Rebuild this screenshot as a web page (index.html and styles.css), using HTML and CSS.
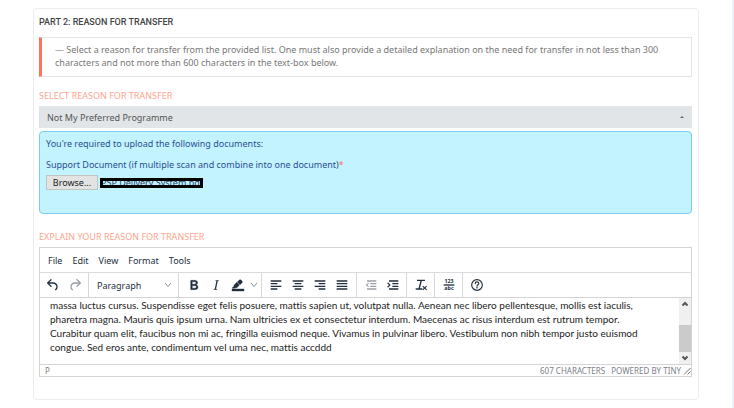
FILE: index.html
```html
<!DOCTYPE html>
<html lang="en">
<head>
<meta charset="utf-8">
<meta name="viewport" content="width=device-width, initial-scale=1">
<title>Reason for Transfer</title>
<link rel="stylesheet" href="styles.css">
</head>
<body>
<main class="page">
  <form class="card">
    <h2 class="title">PART 2: REASON FOR TRANSFER</h2>
    <p class="note">— Select a reason for transfer from the provided list. One must also provide a detailed explanation on the need for transfer in not less than 300 characters and not more than 600 characters in the text-box below.</p>

    <label class="label" for="reason">SELECT REASON FOR TRANSFER</label>
    <div class="select-wrap">
      <select class="select" id="reason"><option>Not My Preferred Programme</option></select>
      <span class="caret"></span>
    </div>

    <section class="upload">
      <p>You're required to upload the following documents:</p>
      <p id="doc-label">Support Document (if multiple scan and combine into one document)<span class="star">*</span></p>
      <div class="file-row">
        <button class="browse" type="button" aria-describedby="doc-label">Browse...</button>
        <span class="file-name">PSP Delivery System.pdf</span>
      </div>
    </section>

    <label class="label label-explain" for="explain">EXPLAIN YOUR REASON FOR TRANSFER</label>
    <div class="editor">
      <div class="menubar">
        <button type="button">File</button>
        <button type="button">Edit</button>
        <button type="button">View</button>
        <button type="button">Format</button>
        <button type="button">Tools</button>
      </div>
      <div class="toolbar">
        <div class="group">
          <button class="tool" type="button" aria-label="Undo"><svg viewBox="0 0 24 24"><path d="M6.4 8H12c3.7 0 6.2 2 6.8 5.1.6 2.7-.4 5.6-2.3 6.8a1 1 0 0 1-1-1.8c1.1-.6 1.8-2.7 1.4-4.6-.5-2.1-2.1-3.5-4.9-3.5H6.4l3.3 3.3a1 1 0 1 1-1.4 1.4l-5-5a1 1 0 0 1 0-1.4l5-5a1 1 0 0 1 1.4 1.4L6.4 8z"/></svg></button>
          <button class="tool" type="button" aria-label="Redo" disabled><svg viewBox="0 0 24 24"><path d="M17.6 10H12c-2.8 0-4.4 1.4-4.9 3.5-.4 2 .3 4 1.4 4.6a1 1 0 1 1-1 1.8c-2-1.2-2.9-4.1-2.3-6.8.6-3 3-5.1 6.8-5.1h5.6l-3.3-3.3a1 1 0 1 1 1.4-1.4l5 5a1 1 0 0 1 0 1.4l-5 5a1 1 0 0 1-1.4-1.4l3.3-3.3z"/></svg></button>
        </div>
        <div class="group">
          <button class="format" type="button">Paragraph <svg class="chevron" viewBox="0 0 10 10"><path d="M2 3l3 3.500 3-3.500"/></svg></button>
        </div>
        <div class="group group-wide">
          <button class="tool" type="button" aria-label="Bold"><svg viewBox="0 0 24 24"><path d="M7.800 19c-.3 0-.5 0-.6-.2l-.2-.5V5.700c0-.2 0-.4.2-.5l.6-.2h5c1.500 0 2.700.3 3.500 1 .7.6 1.100 1.400 1.100 2.500a3 3 0 0 1-.6 1.900c-.4.6-1 1-1.600 1.200.4.1.9.3 1.300.6s.8.7 1 1.200c.4.4.5 1 .5 1.600 0 1.300-.4 2.300-1.300 3-.8.7-2.100 1-3.800 1H7.800zm5-8.300c.6 0 1.200-.1 1.600-.5.4-.3.6-.7.6-1.300 0-1.100-.8-1.700-2.300-1.700H9.300v3.500h3.400zm.5 6c.7 0 1.300-.1 1.700-.4.4-.4.6-.9.6-1.500s-.2-1-.7-1.400c-.4-.3-1-.4-2-.4H9.400v3.800h4z" stroke="currentColor" stroke-width=".6"/></svg></button>
          <button class="tool" type="button" aria-label="Italic"><svg viewBox="0 0 24 24"><path d="M16.700 4.700l-.1.9h-.3c-.6 0-1 0-1.400.3-.3.3-.4.6-.5 1.100l-2.100 9.800v.6c0 .5.4.8 1.400.8h.2l-.2.8H8l.2-.8h.2c1.100 0 1.800-.5 2-1.500l2-9.800.1-.5c0-.6-.4-.8-1.400-.8h-.3l.2-.9h5.800z"/></svg></button>
          <button class="tool" type="button" aria-label="Background color"><svg viewBox="0 0 24 24"><path d="M3 18h18v3H3zM7.700 16.700H3l3.300-3.300-.7-.8L10.200 8l4 4.100-4 4.200c-.2.2-.6.2-.8 0l-.6-.7-1.100 1.100zm5-7.500L11 7.400l3-2.900a2 2 0 0 1 2.600 0L18 6c.7.7.7 2 0 2.700l-2.900 2.900-1.800-1.800-.6-.6z" stroke="currentColor" stroke-width=".6"/></svg></button>
          <button class="drop" type="button" aria-label="Color options"><svg class="chevron" viewBox="0 0 10 10"><path d="M2 3l3 3.500 3-3.500"/></svg></button>
        </div>
        <div class="group group-aligns">
          <button class="tool" type="button" aria-label="Align left"><svg viewBox="0 0 24 24"><path d="M4 5h16v2H4zM4 9h10v2H4zM4 13h16v2H4zM4 17h10v2H4z"/></svg></button>
          <button class="tool" type="button" aria-label="Align center"><svg viewBox="0 0 24 24"><path d="M4 5h16v2H4zM7 9h10v2H7zM4 13h16v2H4zM7 17h10v2H7z"/></svg></button>
          <button class="tool" type="button" aria-label="Align right"><svg viewBox="0 0 24 24"><path d="M4 5h16v2H4zM10 9h10v2H10zM4 13h16v2H4zM10 17h10v2H10z"/></svg></button>
          <button class="tool" type="button" aria-label="Justify"><svg viewBox="0 0 24 24"><path d="M4 5h16v2H4zM4 9h16v2H4zM4 13h16v2H4zM4 17h16v2H4z"/></svg></button>
        </div>
        <div class="group">
          <button class="tool" type="button" aria-label="Decrease indent" disabled><svg viewBox="0 0 24 24"><path d="M6 5h14v2H6zM11 9h9v2h-9zM11 13h9v2h-9zM6 17h14v2H6zM8 8.500l1 1L6.500 12 9 14.500l-1 1L4 12z"/></svg></button>
          <button class="tool" type="button" aria-label="Increase indent"><svg viewBox="0 0 24 24"><path d="M6 5h14v2H6zM11 9h9v2h-9zM11 13h9v2h-9zM6 17h14v2H6zM4.500 8l-1.200 1.200L6 12l-2.700 2.800L4.500 16l4-4z"/></svg></button>
        </div>
        <div class="group">
          <button class="tool" type="button" aria-label="Clear formatting"><svg viewBox="0 0 24 24"><path d="M6 4h12v2h-4.800l-2.700 11H14v2H4v-2h4.400l2.700-11H6zM15.200 13l2.300 2.300 2.300-2.300 1.200 1.200-2.300 2.300 2.300 2.300-1.200 1.200-2.300-2.300-2.300 2.300-1.200-1.200 2.300-2.300-2.300-2.300z"/></svg></button>
        </div>
        <div class="group">
          <button class="tool" type="button" aria-label="Word count"><svg viewBox="0 0 24 24"><path d="M4 11h16v2H4z"/><text x="12" y="9" text-anchor="middle">123</text><text x="12" y="20" text-anchor="middle">abc</text></svg></button>
        </div>
        <div class="group">
          <button class="tool" type="button" aria-label="Help"><svg viewBox="0 0 24 24"><g fill="none" stroke="currentColor" stroke-width="1.700"><circle cx="12" cy="12" r="8"/><path d="M9.300 10c0-3.600 5.400-3.400 5.400-.3 0 2-2.700 2-2.700 4" stroke-linecap="round"/></g><circle cx="12" cy="16.200" r="1.100"/></svg></button>
        </div>
      </div>
      <div class="content">
        <textarea id="explain" class="text" spellcheck="false" wrap="off">
massa luctus cursus. Suspendisse eget felis posuere, mattis sapien ut, volutpat nulla. Aenean nec libero pellentesque, mollis est iaculis,
pharetra magna. Mauris quis ipsum urna. Nam ultricies ex et consectetur interdum. Maecenas ac risus interdum est rutrum tempor.
Curabitur quam elit, faucibus non mi ac, fringilla euismod neque. Vivamus in pulvinar libero. Vestibulum non nibh tempor justo euismod
congue. Sed eros ante, condimentum vel uma nec, mattis accddd</textarea>
        <div class="scrollbar" aria-hidden="true">
          <svg viewBox="0 0 12 12"><path d="M3.500 7.500L6 5l2.500 2.500"/></svg>
          <span class="thumb"></span>
          <svg viewBox="0 0 12 12"><path d="M3.500 4.500L6 7l2.500-2.500"/></svg>
        </div>
      </div>
      <div class="status">
        <span class="path">P</span>
        <span>607 CHARACTERS</span>
        <a class="brand" href="#tiny">POWERED BY TINY</a>
        <svg class="grip" viewBox="0 0 8 8"><path d="M1 7.500L7.500 1M4.500 7.500l3-3"/></svg>
      </div>
    </div>
  </form>
</main>
</body>
</html>
```
FILE: styles.css
```css
*, *::after { box-sizing: border-box; }

body {
  margin: 0;
  background: #fff;
  color: #777;
  font: 9px/13px "Noto Sans", "Open Sans", sans-serif;
}

p, h2 { margin: 0; }

button {
  margin: 0;
  padding: 0;
  border: 0;
  background: none;
  color: inherit;
  font: inherit;
}

.page {
  min-height: 100vh;
  padding: 8px 33px 9px;
  border-right: 2px solid #edf2f8;
}

.card {
  padding: 7px 6px 22px 5px;
  border: 1px solid #ececee;
  border-radius: 4px;
}

.title {
  color: #444;
  font: 500 9px/13px Roboto, sans-serif;
}

.note {
  margin-top: 8px;
  padding: 5px 24px 7px 13px;
  border: 1px solid #e4e4e6;
  border-left: 3px solid #ff7454;
}

.label {
  display: block;
  margin: 12px 0 4px;
  color: #ffa48e;
}

.select-wrap {
  display: grid;
  align-items: center;
}

.select {
  grid-area: 1 / 1;
  width: 100%;
  height: 22px;
  padding: 0 8px;
  border: 0;
  border-radius: 0;
  background: #e1e5e8;
  color: #555;
  font: inherit;
  appearance: none;
}

.caret {
  grid-area: 1 / 1;
  justify-self: end;
  margin-right: 8px;
  border: 2px solid transparent;
  border-top: 0;
  border-bottom-color: #666;
}

.upload {
  margin-top: 3px;
  padding: 5px 6px 23px;
  border: 1px solid #7ccbee;
  border-radius: 4px;
  background: #c2f3ff;
  color: #2d4f93;
}

.upload p + p { margin-top: 8px; }

.star { color: #ff7454; }

.file-row {
  display: flex;
  align-items: center;
  gap: 2px;
  margin-top: 4px;
}

.browse {
  width: 52px;
  height: 15px;
  border: 1px solid #c4c4c4;
  background: #e3e3e3;
  color: #222;
  line-height: 12px;
}

.file-name {
  position: relative;
  padding-left: 1px;
  color: #27406b;
  line-height: 10px;
  white-space: nowrap;
}

.file-name::after {
  content: "";
  position: absolute;
  inset: 0 auto 0 0;
  width: 103px;
  border: 3px solid #000;
}

.label-explain { margin-top: 16px; }

.editor {
  border: 1px solid #d4d4d6;
  color: #222f3e;
}

.menubar {
  display: flex;
  gap: 10px;
  height: 25px;
  padding: 0 8px;
  border-bottom: 1px solid #dcdcde;
}

.toolbar {
  display: flex;
  height: 25px;
  border-bottom: 1px solid #d4d4d6;
}

.group {
  display: flex;
  align-items: center;
  padding: 0 2px;
  border-right: 1px solid #d8d8da;
}

.group:last-child { border-right: 0; }

.group-wide { padding: 0 2px 0 4px; }

.group-aligns { padding: 0 3px; }

.tool {
  display: grid;
  place-items: center;
  width: 22px;
  height: 22px;
}

.group:nth-child(n + 5) { padding: 0 2px 0 3px; }

.tool svg {
  width: 16px;
  height: 16px;
  fill: currentColor;
}

.tool text { font: bold 8px "Open Sans", sans-serif; }

.tool:disabled { color: #9a9fa6; }

.format {
  display: flex;
  align-items: center;
  justify-content: space-between;
  width: 85px;
  padding: 0 3px 0 6px;
}

.drop {
  display: grid;
  place-items: center;
  width: 10px;
}

.chevron {
  width: 10px;
  height: 10px;
  fill: none;
  stroke: #8b9199;
}

.content {
  display: flex;
  height: 66px;
}

.text {
  flex: 1;
  min-width: 0;
  padding: 0 10px;
  border: 0;
  outline: 0;
  resize: none;
  overflow: hidden;
  background: none;
  color: #222;
  font: 10px/14px Lato, sans-serif;
  font-variant-ligatures: none;
}

.scrollbar {
  display: flex;
  flex-direction: column;
  width: 12px;
  background: #f0f0f0;
}

.scrollbar svg {
  width: 12px;
  height: 12px;
  fill: none;
  stroke: #555;
  stroke-width: 2;
}

.thumb {
  height: 27px;
  margin-top: auto;
  background: #cbcbcb;
}

.status {
  display: flex;
  align-items: center;
  gap: 2px;
  height: 12px;
  padding-left: 5px;
  border-top: 1px solid #d4d4d6;
  color: #7b818b;
  font-size: 8px;
  line-height: 11px;
}

.path { margin-right: auto; }

.brand {
  margin-left: 4px;
  color: inherit;
  text-decoration: none;
}

.grip {
  width: 8px;
  height: 8px;
  stroke: #777;
}
```
